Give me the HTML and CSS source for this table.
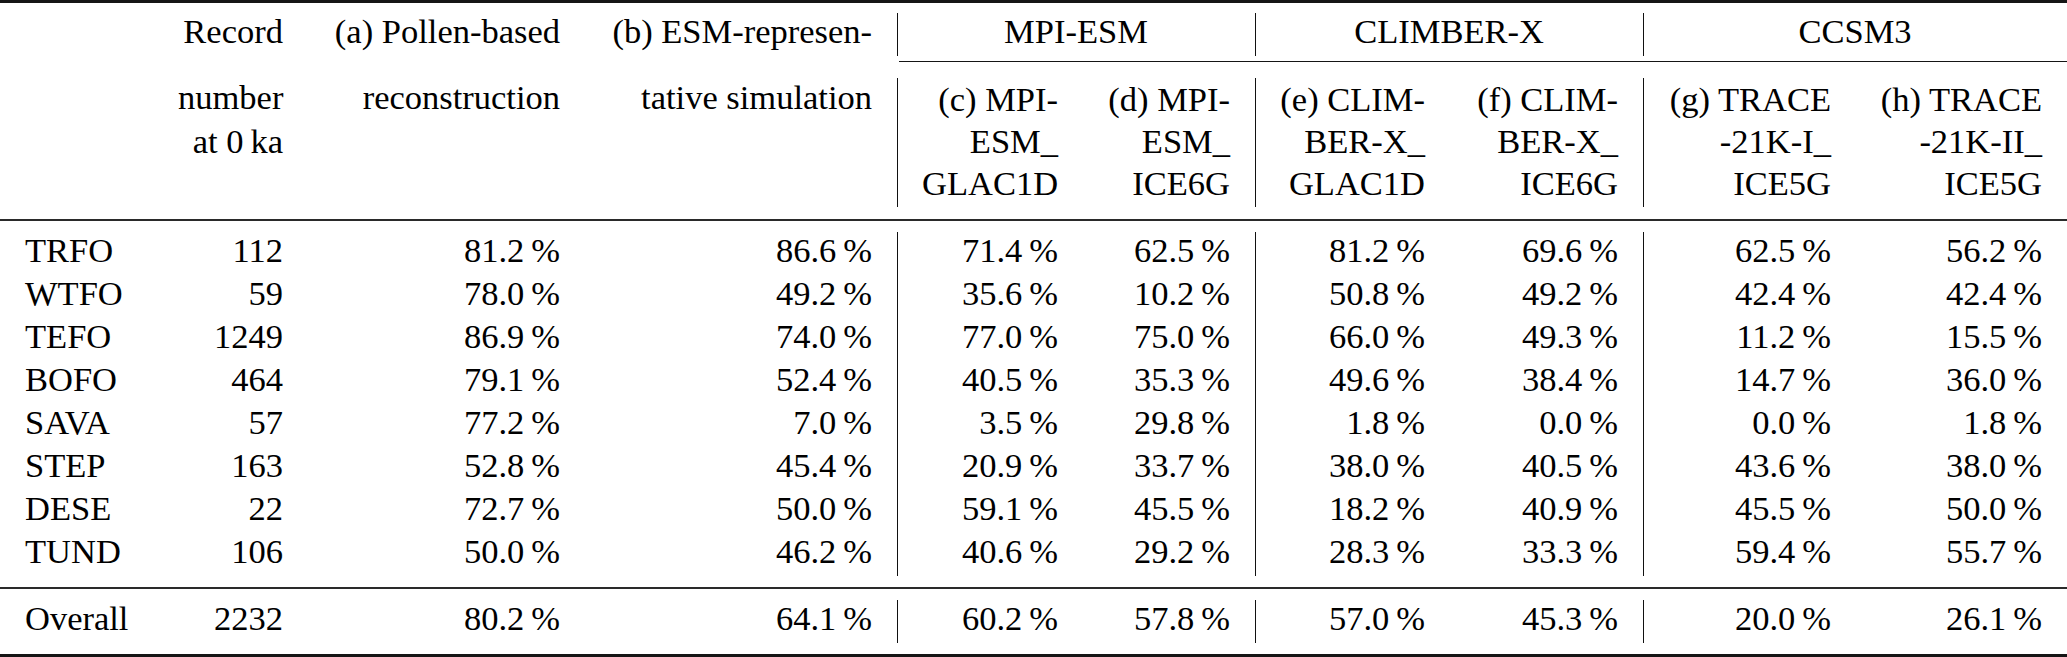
FILE: index.html
```html
<!DOCTYPE html>
<html lang="en">
<head>
<meta charset="utf-8">
<title>Biome agreement table</title>
<link rel="stylesheet" href="styles.css">
</head>
<body>
<table class="tbl">
  <colgroup>
    <col class="w0"><col class="w1"><col class="w2"><col class="w3">
    <col class="wc"><col class="wd"><col class="we"><col class="wf"><col class="wg"><col class="wh">
  </colgroup>
  <thead>
    <tr class="sp"><td colspan="10"><div class="rule heavy top"></div></td></tr>
    <tr class="row">
      <th></th>
      <th>Record</th>
      <th>(a) Pollen-based</th>
      <th>(b) ESM-represen-</th>
      <th colspan="2" class="v ctr">MPI-ESM</th>
      <th colspan="2" class="v ctr">CLIMBER-X</th>
      <th colspan="2" class="v ctr">CCSM3</th>
    </tr>
    <tr class="sp"><td colspan="4"></td><td colspan="6"><div class="rule cmid"></div></td></tr>
    <tr class="sub">
      <th></th>
      <th class="hx"><div>number<br>at 0&#8201;ka</div></th>
      <th class="hx"><div>reconstruction</div></th>
      <th class="hx"><div>tative simulation</div></th>
      <th class="v">(c) MPI-<br>ESM_<br>GLAC1D</th>
      <th>(d) MPI-<br>ESM_<br>ICE6G</th>
      <th class="v">(e) CLIM-<br>BER-X_<br>GLAC1D</th>
      <th>(f) CLIM-<br>BER-X_<br>ICE6G</th>
      <th class="v">(g) TRACE<br>-21K-I_<br>ICE5G</th>
      <th class="last">(h) TRACE<br>-21K-II_<br>ICE5G</th>
    </tr>
    <tr class="sp"><td colspan="10"><div class="rule mid"></div></td></tr>
  </thead>
  <tbody>
    <tr class="row"><td class="lab">TRFO</td><td>112</td><td>81.2&#8201;%</td><td>86.6&#8201;%</td><td class="v">71.4&#8201;%</td><td>62.5&#8201;%</td><td class="v">81.2&#8201;%</td><td>69.6&#8201;%</td><td class="v">62.5&#8201;%</td><td>56.2&#8201;%</td></tr>
    <tr class="row"><td class="lab">WTFO</td><td>59</td><td>78.0&#8201;%</td><td>49.2&#8201;%</td><td class="v">35.6&#8201;%</td><td>10.2&#8201;%</td><td class="v">50.8&#8201;%</td><td>49.2&#8201;%</td><td class="v">42.4&#8201;%</td><td>42.4&#8201;%</td></tr>
    <tr class="row"><td class="lab">TEFO</td><td>1249</td><td>86.9&#8201;%</td><td>74.0&#8201;%</td><td class="v">77.0&#8201;%</td><td>75.0&#8201;%</td><td class="v">66.0&#8201;%</td><td>49.3&#8201;%</td><td class="v">11.2&#8201;%</td><td>15.5&#8201;%</td></tr>
    <tr class="row"><td class="lab">BOFO</td><td>464</td><td>79.1&#8201;%</td><td>52.4&#8201;%</td><td class="v">40.5&#8201;%</td><td>35.3&#8201;%</td><td class="v">49.6&#8201;%</td><td>38.4&#8201;%</td><td class="v">14.7&#8201;%</td><td>36.0&#8201;%</td></tr>
    <tr class="row"><td class="lab">SAVA</td><td>57</td><td>77.2&#8201;%</td><td>7.0&#8201;%</td><td class="v">3.5&#8201;%</td><td>29.8&#8201;%</td><td class="v">1.8&#8201;%</td><td>0.0&#8201;%</td><td class="v">0.0&#8201;%</td><td>1.8&#8201;%</td></tr>
    <tr class="row"><td class="lab">STEP</td><td>163</td><td>52.8&#8201;%</td><td>45.4&#8201;%</td><td class="v">20.9&#8201;%</td><td>33.7&#8201;%</td><td class="v">38.0&#8201;%</td><td>40.5&#8201;%</td><td class="v">43.6&#8201;%</td><td>38.0&#8201;%</td></tr>
    <tr class="row"><td class="lab">DESE</td><td>22</td><td>72.7&#8201;%</td><td>50.0&#8201;%</td><td class="v">59.1&#8201;%</td><td>45.5&#8201;%</td><td class="v">18.2&#8201;%</td><td>40.9&#8201;%</td><td class="v">45.5&#8201;%</td><td>50.0&#8201;%</td></tr>
    <tr class="row"><td class="lab">TUND</td><td>106</td><td>50.0&#8201;%</td><td>46.2&#8201;%</td><td class="v">40.6&#8201;%</td><td>29.2&#8201;%</td><td class="v">28.3&#8201;%</td><td>33.3&#8201;%</td><td class="v">59.4&#8201;%</td><td>55.7&#8201;%</td></tr>
  </tbody>
  <tfoot>
    <tr class="sp"><td colspan="10"><div class="rule mid"></div></td></tr>
    <tr class="row"><td class="lab">Overall</td><td>2232</td><td>80.2&#8201;%</td><td>64.1&#8201;%</td><td class="v">60.2&#8201;%</td><td>57.8&#8201;%</td><td class="v">57.0&#8201;%</td><td>45.3&#8201;%</td><td class="v">20.0&#8201;%</td><td>26.1&#8201;%</td></tr>
    <tr class="sp"><td colspan="10"><div class="rule heavy bottom"></div></td></tr>
  </tfoot>
</table>
</body>
</html>
```

FILE: styles.css
```css
html, body {
  margin: 0;
  padding: 0;
  background: #ffffff;
}

body {
  font-family: "Liberation Serif", "Times New Roman", serif;
  font-size: 34.5px;
  color: #000000;
  overflow: hidden;
}

.tbl {
  width: 2067px;
  table-layout: fixed;
  border-collapse: separate;
  border-spacing: 0;
}

.w0 { width: 153px; }
.w1 { width: 155px; }
.w2 { width: 277px; }
.w3 { width: 312px; }
.wc { width: 186px; }
.wd { width: 172px; }
.we { width: 195px; }
.wf { width: 193px; }
.wg { width: 213px; }
.wh { width: 211px; }

.tbl th,
.tbl td {
  font-weight: normal;
  text-align: right;
  vertical-align: top;
  white-space: nowrap;
  padding: 0 25px;
}

/* single-line rows: 43px tall, baseline 30px below the row top */
.row > th,
.row > td {
  line-height: 37px;
  padding-bottom: 6px;
}

.tbl .lab {
  text-align: left;
}

.tbl .ctr {
  text-align: center;
}

/* vertical rules (only span the text rows, like booktabs + |) */
.tbl .v {
  border-left: 1px solid #111;
  padding-left: 24px;
}

/* the three-line sub-header row */
.sub > th {
  line-height: 42px;
  padding-bottom: 3px;
}

.sub > th.hx {
  line-height: 44px;
}

.sub > th.hx > div {
  margin-top: -3.5px;
}

.sub > th.last {
  padding-left: 20px;
}

/* rule rows */
.sp > td {
  padding: 0;
}

.rule {
  background: #151515;
}

.rule.heavy {
  height: 3px;
}

.rule.top {
  margin: 0 0 10px;
}

.rule.bottom {
  margin: 11px 0 0;
}

.rule.mid {
  height: 2px;
  background: #2a2a2a;
  margin: 12px 0 11px;
}

tfoot .rule.mid {
  margin: 11px 0 11px;
}

.rule.cmid {
  height: 1px;
  margin: 5px 0 16px 2px;
}
```
